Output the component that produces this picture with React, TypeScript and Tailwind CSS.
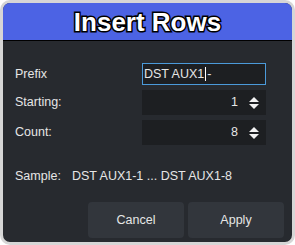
const Spinner = () => (
  <svg width="10" height="12" viewBox="0 0 10 12" className="shrink-0">
    <polygon points="0,5 5,0 10,5" fill="#f2f2f2" />
    <polygon points="0,7 10,7 5,12" fill="#f2f2f2" />
  </svg>
);

const NumberField = ({ value }: { value: number }) => (
  <div className="h-[25px] w-[124px] bg-[#1d1f22] flex items-center justify-end pr-[7px] gap-[11px]">
    <span>{value}</span>
    <Spinner />
  </div>
);

const App = () => {
  return (
    <div className="w-[295px] h-[245px] bg-white font-['Liberation_Sans',Arial,sans-serif]">
      <div className="w-full h-full rounded-[10px] border-[3px] border-[#d6d6d6] overflow-hidden flex flex-col bg-[#272a2f]">
        {/* 타이틀 바 */}
        <div className="h-[38px] shrink-0 bg-[#4c63e4] border-b border-black flex items-center justify-center">
          <span className="text-[26px] font-bold leading-none text-white [-webkit-text-stroke:3px_#000] [paint-order:stroke_fill]">
            Insert Rows
          </span>
        </div>

        {/* 입력 영역 */}
        <div className="flex flex-col gap-[5px] pt-[22px] pl-[12px] pr-[26px] text-[12.5px] text-[#e6e6e6]">
          <div className="flex items-center justify-between">
            <span>Prefix</span>
            <div className="h-[22px] w-[124px] bg-[#1d1f22] border border-[#4b9ada] flex items-center pl-[1px]">
              <span>DST AUX1</span>
              <span className="w-px h-[14px] bg-white mx-[1px]" />
              <span>-</span>
            </div>
          </div>
          <div className="flex items-center justify-between">
            <span>Starting:</span>
            <NumberField value={1} />
          </div>
          <div className="flex items-center justify-between">
            <span>Count:</span>
            <NumberField value={8} />
          </div>
        </div>

        <div className="mt-[23px] pl-[12px] h-[16px] flex items-center text-[12.5px] text-[#e6e6e6]">
          <span className="w-[57px]">Sample:</span>
          <span>DST AUX1-1 ... DST AUX1-8</span>
        </div>

        {/* 버튼 */}
        <div className="mt-[18px] flex justify-end gap-[4px] pr-[8px]">
          <button className="w-[96px] h-[36px] rounded-[4px] bg-[#32363c] text-[12.5px] text-[#e6e6e6]">
            Cancel
          </button>
          <button className="w-[96px] h-[36px] rounded-[4px] bg-[#32363c] text-[12.5px] text-[#e6e6e6]">
            Apply
          </button>
        </div>
      </div>
    </div>
  );
};

export default App;
